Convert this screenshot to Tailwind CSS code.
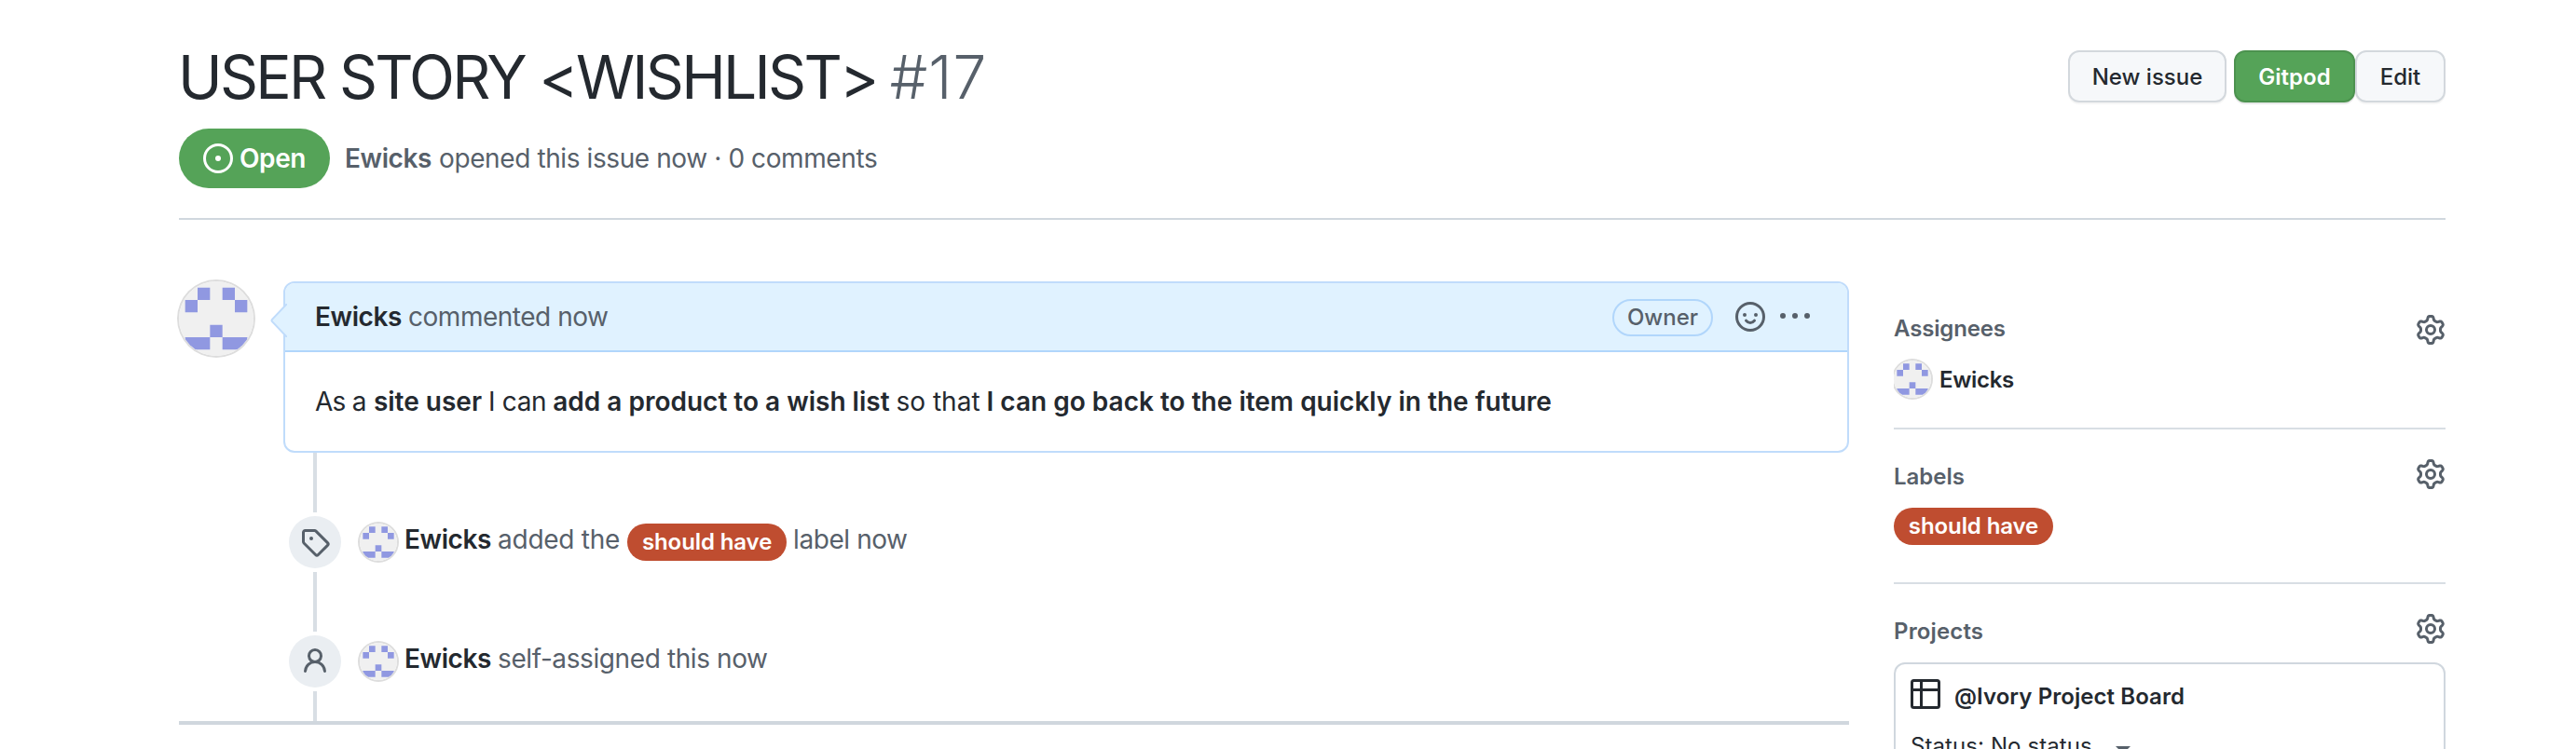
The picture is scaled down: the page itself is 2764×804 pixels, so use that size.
<!DOCTYPE html>
<html lang="en">
<head>
<meta charset="utf-8">
<title>USER STORY &lt;WISHLIST&gt; #17</title>
<script src="https://cdn.jsdelivr.net/npm/@tailwindcss/browser@4"></script>
</head>
<body class="bg-white h-[804px] overflow-hidden font-['Inter',sans-serif] text-[28px] leading-10 text-[#24292f] whitespace-nowrap">
<svg class="hidden">
  <symbol id="identicon" viewBox="0 0 420 420">
    <rect width="420" height="420" fill="#f0f0f0"/>
    <path fill="#9098e1" d="M105 35h70v70h-70zM245 35h70v70h-70zM35 105h70v70h-70zM315 105h70v70h-70zM175 245h70v70h-70zM35 315h140v70h-140zM245 315h140v70h-140z"/>
  </symbol>
  <symbol id="gear" viewBox="0 0 16 16"><path fill="currentColor" fill-rule="evenodd" d="M7.429 1.525a6.593 6.593 0 011.142 0c.036.003.108.036.137.146l.289 1.105c.147.56.55.967.997 1.189.174.086.341.183.501.29.417.278.97.423 1.53.27l1.102-.303c.11-.03.175.016.195.046.219.31.41.641.573.989.014.031.022.11-.059.19l-.815.806c-.411.406-.562.957-.53 1.456a4.588 4.588 0 010 .582c-.032.499.119 1.05.53 1.456l.815.806c.08.08.073.159.059.19a6.494 6.494 0 01-.573.99c-.02.029-.086.074-.195.045l-1.103-.303c-.559-.153-1.112-.008-1.529.27-.16.107-.327.204-.5.29-.449.222-.851.628-.998 1.189l-.289 1.105c-.029.11-.101.143-.137.146a6.613 6.613 0 01-1.142 0c-.036-.003-.108-.037-.137-.146l-.289-1.105c-.147-.56-.55-.967-.997-1.189a4.502 4.502 0 01-.501-.29c-.417-.278-.97-.423-1.53-.27l-1.102.303c-.11.03-.175-.016-.195-.046a6.492 6.492 0 01-.573-.989c-.014-.031-.022-.11.059-.19l.815-.806c.411-.406.562-.957.53-1.456a4.587 4.587 0 010-.582c.032-.499-.119-1.05-.53-1.456l-.815-.806c-.08-.08-.073-.159-.059-.19a6.44 6.44 0 01.573-.99c.02-.029.086-.075.195-.045l1.103.303c.559.153 1.112.008 1.529-.27.16-.107.327-.204.5-.29.449-.222.851-.628.998-1.189l.289-1.105c.029-.11.101-.143.137-.146zM8 0c-.236 0-.47.01-.701.03-.743.065-1.29.615-1.458 1.261l-.29 1.106c-.017.066-.078.158-.211.224a5.994 5.994 0 00-.668.386c-.123.082-.233.09-.3.071L3.27 2.776c-.644-.177-1.392.02-1.82.63a7.977 7.977 0 00-.704 1.217c-.315.675-.111 1.422.363 1.891l.815.806c.05.048.098.147.088.294a6.084 6.084 0 000 .772c.01.147-.038.246-.088.294l-.815.806c-.474.469-.678 1.216-.363 1.891.2.428.436.835.704 1.218.428.609 1.176.806 1.82.63l1.103-.303c.066-.019.176-.011.299.071.213.143.436.272.668.386.133.066.194.158.212.224l.289 1.106c.169.646.715 1.196 1.458 1.26a8.094 8.094 0 001.402 0c.743-.064 1.29-.614 1.458-1.26l.29-1.106c.017-.066.078-.158.211-.224a5.98 5.98 0 00.668-.386c.123-.082.233-.09.3-.071l1.102.302c.644.177 1.392-.02 1.82-.63.268-.382.505-.789.704-1.217.315-.675.111-1.422-.364-1.891l-.814-.806c-.05-.048-.098-.147-.088-.294a6.1 6.1 0 000-.772c-.01-.147.039-.246.088-.294l.814-.806c.475-.469.679-1.216.364-1.891a7.992 7.992 0 00-.704-1.218c-.428-.609-1.176-.806-1.82-.63l-1.103.303c-.066.019-.176.011-.299-.071a5.991 5.991 0 00-.668-.386c-.133-.066-.194-.158-.212-.224L10.16 1.29C9.99.645 9.444.095 8.701.031A8.094 8.094 0 008 0zm1.5 8a1.5 1.5 0 11-3 0 1.5 1.5 0 013 0zM11 8a3 3 0 11-6 0 3 3 0 016 0z"/></symbol>
</svg>

<div class="w-[2432px] ml-[192px]">
  <header class="pt-[47px] pb-8 border-b-2 border-[#d0d7de]">
    <div class="flex items-start">
      <h1 class="flex-1 flex text-[64px] leading-[72px] -ml-px">
        <span class="tracking-[-2.69px]">USER STORY &lt;WISHLIST&gt;</span>
        <span class="ml-[14px] font-light text-[#57606a] tracking-[1.1px]">#17</span>
      </h1>
      <div class="flex mt-[7px] text-2xl font-medium">
        <button class="w-[170px] h-14 pt-px rounded-xl border-2 border-[#d3d8dd] bg-[#f6f8fa] shadow-[0_2px_0_rgba(27,31,36,0.04)]">New issue</button>
        <button class="w-[130px] h-14 pt-px ml-2 rounded-xl border-2 border-[#4c924f] bg-[#55a358] text-white font-semibold shadow-[0_2px_0_rgba(27,31,36,0.1)]">Gitpod</button>
        <button class="w-[97px] h-14 pt-px rounded-xl border-2 border-[#d3d8dd] bg-[#f6f8fa] shadow-[0_2px_0_rgba(27,31,36,0.04)]">Edit</button>
      </div>
    </div>
    <div class="flex items-center mt-[19px] text-[#57606a]">
      <span class="flex items-center w-[162px] h-16 pl-[26px] rounded-full bg-[#55a358] text-white font-semibold tracking-[-0.4px]">
        <svg class="size-8 mr-[7px]" viewBox="0 0 16 16" fill="currentColor"><path d="M8 9.5a1.5 1.5 0 100-3 1.5 1.5 0 000 3z"/><path fill-rule="evenodd" d="M8 0a8 8 0 100 16A8 8 0 008 0zM1.5 8a6.5 6.5 0 1113 0 6.5 6.5 0 01-13 0z"/></svg>Open</span>
      <span class="ml-4 font-semibold tracking-[-0.4px]">Ewicks</span>
      <span class="ml-[8px] tracking-[-0.4px]">opened this issue now · 0 comments</span>
    </div>
  </header>

  <div class="flex gap-12">
    <main class="w-[1792px] pt-[66px]">
      <div class="flex gap-8">
        <svg class="size-20 rounded-full ring-2 ring-[#dddddd]"><use href="#identicon"/></svg>
        <article class="relative w-[1680px] h-[184px] rounded-xl border-2 border-[#c0dcfb]">
          <svg class="absolute -left-4 top-[22px] w-[18px] h-9" viewBox="0 0 18 36"><path d="M18 0L2 16.8Q1 18 2 19.2L18 36" fill="#e0f2ff" stroke="#c0dcfb" stroke-width="2"/></svg>
          <div class="flex items-center h-[74px] pl-8 pr-10 rounded-t-[10px] bg-[#e0f2ff] border-b-2 border-[#b1d6fb] text-[#57606a]">
            <span class="font-semibold tracking-[-0.4px] text-[#24292f]">Ewicks</span>
            <span class="ml-[7px] tracking-[-0.48px]">commented now</span>
            <span class="flex items-center justify-center ml-auto mt-0.5 w-[108px] h-10 rounded-full border-2 border-[#b1d6fb] text-2xl font-medium">Owner</span>
            <svg class="size-8 ml-6" viewBox="0 0 16 16" fill="currentColor"><path fill-rule="evenodd" d="M1.5 8a6.5 6.5 0 1113 0 6.5 6.5 0 01-13 0zM8 0a8 8 0 100 16A8 8 0 008 0zM5 8a1 1 0 100-2 1 1 0 000 2zm7-1a1 1 0 11-2 0 1 1 0 012 0z"/><path d="M5.75 10.1Q6.6 11.25 8 11.25T10.25 10.1" fill="none" stroke="currentColor" stroke-width="1.5" stroke-linecap="round"/></svg>
            <svg class="size-8 ml-4" viewBox="0 0 16 16" fill="currentColor"><path d="M8 9a1.5 1.5 0 100-3 1.5 1.5 0 000 3zM1.5 9a1.5 1.5 0 100-3 1.5 1.5 0 000 3zm13 0a1.5 1.5 0 100-3 1.5 1.5 0 000 3z"/></svg>
          </div>
          <p class="flex items-center h-[106px] pl-8">
            <span class="tracking-[-0.7px]">As a</span>
            <b class="ml-[8px] font-semibold">site user</b>
            <span class="ml-[7px] tracking-[-0.35px]">I can</span>
            <b class="ml-[7px] font-semibold">add a product to a wish list</b>
            <span class="ml-[7px]">so that</span>
            <b class="ml-[7px] font-semibold">I can go back to the item quickly in the future</b>
          </p>
        </article>
      </div>

      <div class="w-1 h-16 ml-[144px] bg-[#d8dee4]"></div>
      <div class="flex items-center h-14 my-1 pl-[118px] text-[#57606a]">
        <span class="flex items-center justify-center size-14 rounded-full bg-[#eaeef2]">
          <svg class="size-8" viewBox="0 0 16 16" fill="currentColor"><path fill-rule="evenodd" d="M2.5 7.775V2.75a.25.25 0 01.25-.25h5.025a.25.25 0 01.177.073l6.25 6.25a.25.25 0 010 .354l-5.025 5.025a.25.25 0 01-.354 0l-6.25-6.25a.25.25 0 01-.073-.177zm-1.5 0V2.75C1 1.784 1.784 1 2.75 1h5.025c.464 0 .91.184 1.238.513l6.25 6.25a1.75 1.75 0 010 2.474l-5.026 5.026a1.75 1.75 0 01-2.474 0l-6.25-6.25A1.75 1.75 0 011 7.775zM6 5a1 1 0 100 2 1 1 0 000-2z"/></svg>
        </span>
        <svg class="size-10 ml-5 rounded-full ring-2 ring-[#dddddd]"><use href="#identicon"/></svg>
        <span class="ml-2 pb-[7px] font-semibold tracking-[-0.4px] text-[#24292f]">Ewicks</span>
        <span class="ml-[7px] pb-[7px] tracking-[-0.26px]">added the</span>
        <span class="flex items-center justify-center ml-[8px] w-[171px] h-10 rounded-full bg-[#bf4d30] text-2xl font-semibold tracking-[-0.1px] text-white">should have</span>
        <span class="ml-[7px] pb-[7px] tracking-[-0.43px]">label now</span>
      </div>
      <div class="w-1 h-16 ml-[144px] bg-[#d8dee4]"></div>
      <div class="flex items-center h-14 my-1 pl-[118px] text-[#57606a]">
        <span class="flex items-center justify-center size-14 rounded-full bg-[#eaeef2]">
          <svg class="size-8" viewBox="0 0 16 16" fill="currentColor"><path fill-rule="evenodd" d="M10.5 5a2.5 2.5 0 11-5 0 2.5 2.5 0 015 0zm.061 3.073a4 4 0 10-5.123 0 6.004 6.004 0 00-3.431 5.142.75.75 0 001.498.07 4.5 4.5 0 018.99 0 .75.75 0 101.498-.07 6.005 6.005 0 00-3.432-5.142z"/></svg>
        </span>
        <svg class="size-10 ml-5 rounded-full ring-2 ring-[#dddddd]"><use href="#identicon"/></svg>
        <span class="ml-2 pb-[7px] font-semibold tracking-[-0.4px] text-[#24292f]">Ewicks</span>
        <span class="ml-[7px] pb-[7px] tracking-[-0.4px]">self-assigned this now</span>
      </div>
      <div class="w-1 h-8 ml-[144px] bg-[#d8dee4]"></div>
      <div class="h-1 bg-[#d0d7de]"></div>
    </main>

    <aside class="w-[592px] h-[568px] overflow-hidden pt-[102px] text-2xl leading-8 font-semibold text-[#57606a]">
      <section class="pb-8 border-b-2 border-[#d8dee4]">
        <div class="flex items-center justify-between h-8"><h2 class="pb-[2px] tracking-[-0.15px]">Assignees</h2><svg class="size-8"><use href="#gear"/></svg></div>
        <div class="flex items-center mt-[17px] -ml-0.5 pl-0.5 text-[#24292f]"><svg class="size-10 rounded-full ring-2 ring-[#dddddd]"><use href="#identicon"/></svg><span class="ml-[9px] pt-px tracking-[-0.3px]">Ewicks</span></div>
      </section>
      <section class="pt-8 pb-10 border-b-2 border-[#d8dee4]">
        <div class="flex items-center justify-between h-8"><h2 class="pt-[5px]">Labels</h2><svg class="size-8"><use href="#gear"/></svg></div>
        <span class="flex items-center justify-center mt-5 w-[171px] h-10 rounded-full bg-[#bf4d30] tracking-[-0.1px] text-white">should have</span>
      </section>
      <section class="pt-8">
        <div class="flex items-center justify-between h-8"><h2 class="pt-[5px] tracking-[0.15px]">Projects</h2><svg class="size-8"><use href="#gear"/></svg></div>
        <div class="mt-5 h-[200px] pt-4 pl-4 rounded-xl border-2 border-[#d0d7de] text-[#24292f]">
          <div class="flex items-center h-8">
            <svg class="size-8" viewBox="0 0 16 16" fill="none" stroke="currentColor" stroke-width="1.5"><rect x=".75" y=".75" width="14.5" height="14.5" rx="1"/><path d="M.75 5.75h14.5M5.75.75v14.5"/></svg>
            <span class="ml-[15px] pt-[5px] tracking-[0.07px]">@Ivory Project Board</span>
          </div>
          <div class="flex items-center mt-6 font-normal"><span class="tracking-[0.09px]">Status: No status</span><svg class="ml-[25px] mt-2 w-4 h-2" viewBox="0 0 16 8"><path d="M0 0h16L8 8z" fill="#57606a"/></svg></div>
        </div>
      </section>
    </aside>
  </div>
</div>
</body>
</html>
